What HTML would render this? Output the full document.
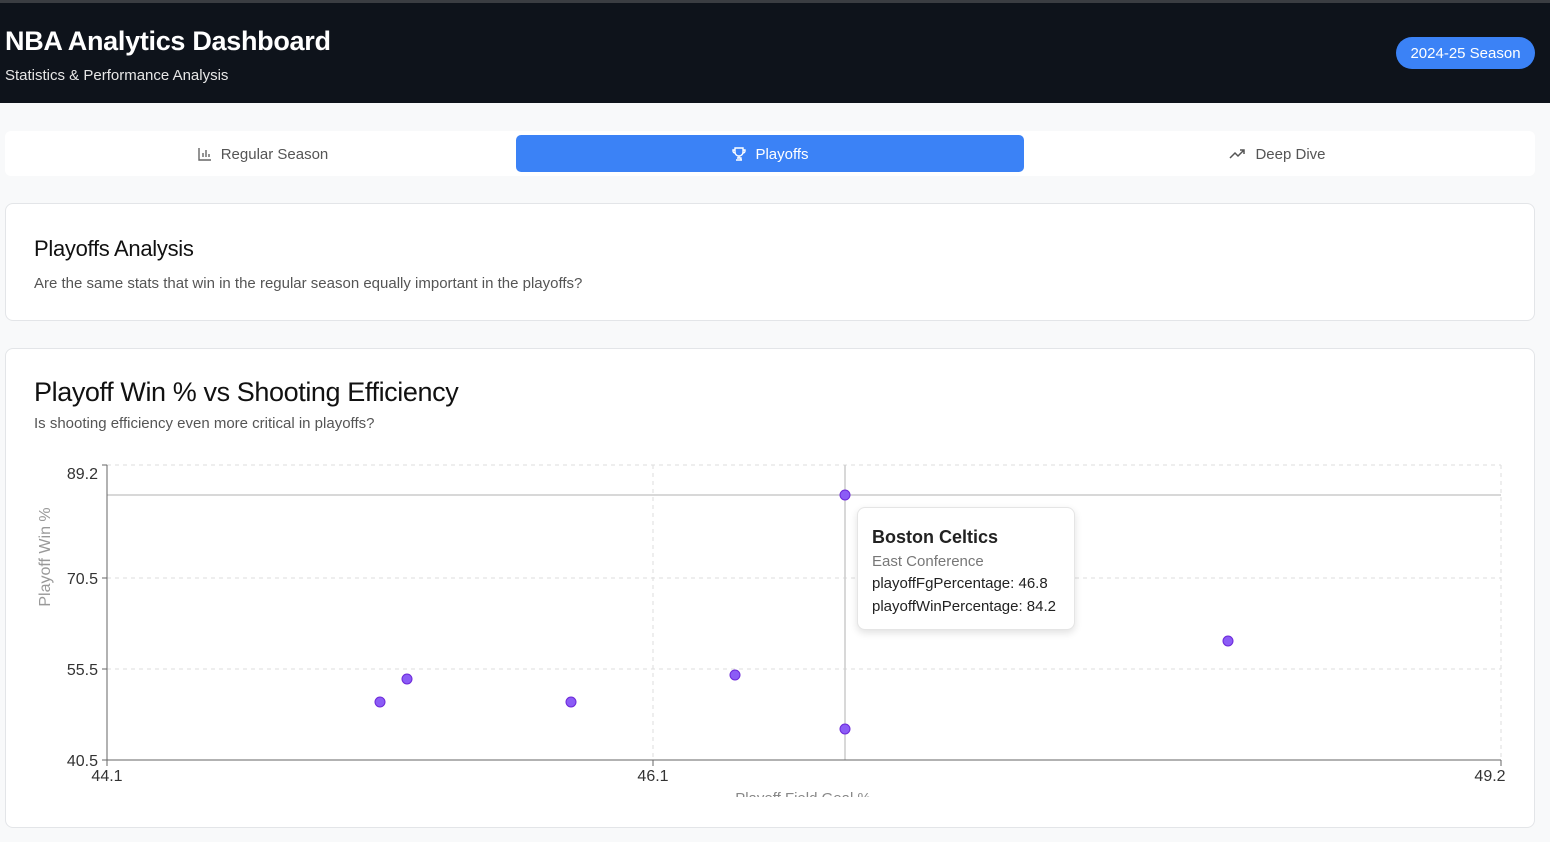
<!DOCTYPE html>
<html><head><meta charset="utf-8"><style>
*{box-sizing:border-box;margin:0;padding:0}
body{width:1550px;height:842px;overflow:hidden;background:#f8f9fa;font-family:"Liberation Sans",sans-serif;position:relative}
.top{position:absolute;left:0;top:0;width:1550px;height:3px;background:#3a3d42}
.hdr{position:absolute;left:0;top:3px;width:1550px;height:100px;background:#0e131b}
.hdr h1{position:absolute;left:5px;top:23px;color:#fff;font-size:27px;font-weight:bold;letter-spacing:-0.3px}
.hdr p{position:absolute;left:5px;top:64px;color:#e6e6e6;font-size:15px}
.badge{position:absolute;left:1396px;top:34px;width:139px;height:32px;border-radius:16px;background:#3b82f6;color:#fff;font-size:15px;text-align:center;line-height:34px}
.tabs{position:absolute;left:5px;top:131px;width:1530px;height:45px;background:#fff;border-radius:6px}
.tab{position:absolute;top:4px;height:37px;line-height:39px;font-size:15px;color:#555;text-align:center;border-radius:5px}
.tab svg{vertical-align:-3px;margin-right:8px}
.card{position:absolute;left:5px;width:1530px;background:#fff;border:1px solid #e3e5e8;border-radius:8px}
</style></head><body>
<div class="top"></div>
<div class="hdr"><h1>NBA Analytics Dashboard</h1><p>Statistics &amp; Performance Analysis</p><div class="badge">2024-25 Season</div></div>
<div class="tabs">
<div class="tab" style="left:4px;width:507px"><svg width="16" height="16" viewBox="0 0 16 16" fill="none" stroke="#666" stroke-width="1.4"><path d="M2 2v12h12M6 11V7M9 11V4M12 11V8"/></svg>Regular Season</div>
<div class="tab" style="left:511px;width:508px;background:#3b82f6;color:#fff"><svg width="16" height="16" viewBox="0 0 16 16" fill="none" stroke="#fff" stroke-width="1.4"><path d="M4 2h8v4a4 4 0 0 1-8 0zM4 4H2v1a2 2 0 0 0 2 2M12 4h2v1a2 2 0 0 1-2 2M8 10v2M5 14h6M6 12h4v2"/></svg>Playoffs</div>
<div class="tab" style="left:1019px;width:507px"><svg width="18" height="16" viewBox="0 0 18 16" fill="none" stroke="#555" stroke-width="1.5"><path d="M1 12l5-5 3 3 6-6M11 4h4v4"/></svg>Deep Dive</div>
</div>
<div class="card" style="top:203px;height:118px">
<div style="position:absolute;left:28px;top:32px;font-size:22px;color:#111;letter-spacing:-0.3px">Playoffs Analysis</div>
<div style="position:absolute;left:28px;top:71px;font-size:15px;color:#555">Are the same stats that win in the regular season equally important in the playoffs?</div>
</div>
<div class="card" style="top:348px;height:480px;overflow:hidden">
<div style="position:absolute;left:28px;top:28px;font-size:27px;color:#111;letter-spacing:-0.4px">Playoff Win % vs Shooting Efficiency</div>
<div style="position:absolute;left:28px;top:66px;font-size:15px;color:#555">Is shooting efficiency even more critical in playoffs?</div>
</div>
<svg style="position:absolute;left:0;top:0" width="1550" height="797" font-family="Liberation Sans, sans-serif">
<g stroke="#ddd" stroke-dasharray="4 4" stroke-width="1">
<line x1="107" y1="465" x2="1501" y2="465"/><line x1="107" y1="578" x2="1501" y2="578"/><line x1="107" y1="669" x2="1501" y2="669"/>
<line x1="653" y1="465" x2="653" y2="760"/><line x1="1501" y1="465" x2="1501" y2="760"/>
</g>
<line x1="107" y1="495" x2="1501" y2="495" stroke="#ccc" stroke-width="1.5"/>
<line x1="845" y1="465" x2="845" y2="760" stroke="#ccc" stroke-width="1.5"/>
<g stroke="#666" stroke-width="1"><line x1="107" y1="465" x2="107" y2="760"/><line x1="107" y1="760" x2="1501" y2="760"/>
<line x1="102" y1="465" x2="107" y2="465"/><line x1="102" y1="578" x2="107" y2="578"/><line x1="102" y1="669" x2="107" y2="669"/><line x1="102" y1="760" x2="107" y2="760"/>
<line x1="107" y1="760" x2="107" y2="766"/><line x1="653" y1="760" x2="653" y2="766"/><line x1="1501" y1="760" x2="1501" y2="766"/></g>
<g font-size="16" fill="#333" text-anchor="end"><text x="98" y="479">89.2</text><text x="98" y="584">70.5</text><text x="98" y="675">55.5</text><text x="98" y="766">40.5</text></g>
<g font-size="16" fill="#333" text-anchor="middle"><text x="107" y="781">44.1</text><text x="653" y="781">46.1</text><text x="1490" y="781">49.2</text></g>
<text x="803" y="803" font-size="15" fill="#888" text-anchor="middle">Playoff Field Goal %</text>
<text transform="translate(50,557) rotate(-90)" font-size="16" fill="#999" text-anchor="middle">Playoff Win %</text>
<g fill="#8b5cf6" stroke="#6d28d9" stroke-width="1">
<circle cx="380" cy="702" r="5"/><circle cx="407" cy="679" r="5"/><circle cx="571" cy="702" r="5"/><circle cx="735" cy="675" r="5"/><circle cx="845" cy="729" r="5"/><circle cx="845" cy="495" r="5"/><circle cx="1228" cy="641" r="5"/>
</g>
</svg>
<div style="position:absolute;left:857px;top:507px;width:218px;height:123px;background:#fff;border:1px solid #e5e5e5;border-radius:8px;box-shadow:0 3px 8px rgba(0,0,0,.12)">
<div style="position:absolute;left:14px;top:19px;font-size:18px;font-weight:bold;color:#222">Boston Celtics</div>
<div style="position:absolute;left:14px;top:45px;font-size:15px;color:#777">East Conference</div>
<div style="position:absolute;left:14px;top:67px;font-size:15px;color:#222">playoffFgPercentage: 46.8</div>
<div style="position:absolute;left:14px;top:90px;font-size:15px;color:#222">playoffWinPercentage: 84.2</div>
</div>
</body></html>
